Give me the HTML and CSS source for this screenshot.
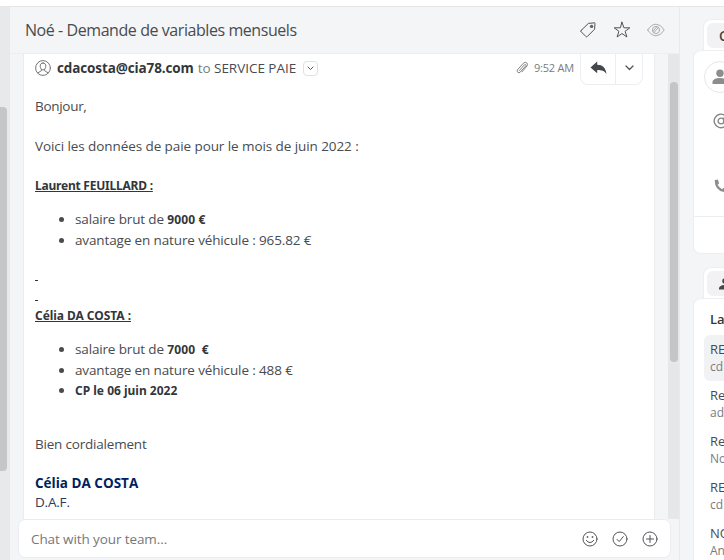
FILE: index.html
```html
<!DOCTYPE html>
<html lang="fr">
<head>
<meta charset="utf-8">
<title>Noé - Demande de variables mensuels</title>
<link rel="stylesheet" href="styles.css">
</head>
<body>
<div class="topbar"></div>
<div class="app">
  <aside class="rail"><div class="rail-thumb"></div></aside>
  <main class="main">
    <header class="head">
      <h1><span class="t-title">Noé - Demande de variables mensuels</span></h1>
      <svg class="ic" width="18" height="18" viewBox="0 0 18 18"><path d="M2 9.6 9.4 2.4 15.6 1.8 16 2.2 15.6 8.2 8.2 15.6Q7.6 16.2 7 15.6L2 10.6Q1.5 10.1 2 9.6Z"/><circle cx="12.6" cy="5.4" r="1.7" class="fill"/></svg>
      <svg class="ic" width="18" height="18" viewBox="0 0 18 18"><path d="M9 1.2 10.9 6.8H16.8L12.1 10.3 13.9 16 9 12.5 4.1 16 5.9 10.3 1.2 6.8H7.1Z"/></svg>
      <svg class="ic pale" width="18" height="18" viewBox="0 0 18 18"><path d="M.8 9Q4.2 3.2 9 3.2T17.2 9Q13.8 14.8 9 14.8T.8 9Z"/><circle cx="9" cy="9" r="3.6"/><path d="M6.9 11.6 11.3 6.6M6 10.2 9.8 5.8"/></svg>
    </header>
    <div class="thread">
      <article class="mail">
        <div class="from">
          <svg class="avatar" width="16" height="16" viewBox="0 0 16 16"><circle cx="8" cy="8" r="7.4"/><path d="M8 3C6.2 3 5.1 4.2 5.2 6.2 5.3 8.4 6.5 10 8 10S10.7 8.4 10.8 6.2C10.9 4.2 9.8 3 8 3ZM6.4 9.5V10.7L3 12.8M9.6 9.5V10.7L13 12.8"/></svg>
          <span class="t-sender">cdacosta@cia78.com</span>
          <span class="t-to"><i>to</i> SERVICE PAIE</span>
          <span class="more"><svg width="7" height="5" viewBox="0 0 7 5"><path d="M1 1 3.5 3.5 6 1"/></svg></span>
          <svg class="clip" width="12" height="14" viewBox="0 0 12 14"><path d="M3.4 9.5 8.5 3.7Q9.3 3.1 9.8 3.7T9.7 5L4.2 11.2Q3 12.3 1.8 11.3T1.5 8.7L7.6 2Q9.3.6 10.8 1.9T11 5L6 10.8"/></svg>
          <time>9:52 AM</time>
          <div class="reply">
            <span class="rb"><svg width="17" height="14" viewBox="0 0 17 14"><path class="solid" d="M.5 6.4 7.2.5V3.7C12.5 3.9 15.7 6.5 16.5 13 14.4 9.8 11.8 9 7.2 9V12.3Z"/></svg></span>
            <span class="rb drop"><svg width="9" height="6" viewBox="0 0 9 6"><path d="M1 1 4.5 4.5 8 1"/></svg></span>
          </div>
        </div>
        <div class="body">
          <p><span class="t-bonjour">Bonjour,</span></p>
          <p class="gap20"><span class="t-voici">Voici les données de paie pour le mois de juin 2022 :</span></p>
          <p class="gap20 name"><u class="t-laurent">Laurent FEUILLARD :</u></p>
          <ul>
            <li><span class="t-li">salaire brut de</span> <b class="t-9000">9000 €</b></li>
            <li><span class="t-av">avantage en nature véhicule : 965.82 €</span></li>
          </ul>
          <p class="name dash first"><u>&nbsp;</u></p>
          <p class="name dash"><u>&nbsp;</u></p>
          <p class="name"><u class="t-celia">Célia DA COSTA :</u></p>
          <ul>
            <li><span class="t-li">salaire brut de</span> <b class="t-9000">7000 &nbsp;€</b></li>
            <li><span class="t-av">avantage en nature véhicule : 488 €</span></li>
            <li class="last"><b>CP le 06 juin 2022</b></li>
          </ul>
          <p class="bye"><span class="t-bye">Bien cordialement</span></p>
          <p class="sign"><strong class="t-sign">Célia DA COSTA</strong></p>
          <p class="daf"><span class="t-daf">D.A.F.</span></p>
        </div>
      </article>
      <div class="track"><div class="thumb"></div></div>
    </div>
    <footer class="chat">
      <span class="t-chat">Chat with your team...</span>
      <svg class="ic" width="16" height="16" viewBox="0 0 16 16"><circle cx="8" cy="8" r="7"/><path d="M4.3 9.4Q8 14 11.7 9.4"/><circle class="fill" cx="5.5" cy="6" r=".9"/><circle class="fill" cx="10.5" cy="6" r=".9"/></svg>
      <svg class="ic" width="16" height="16" viewBox="0 0 16 16"><circle cx="8" cy="8" r="7"/><path d="M5 8.4 7.2 10.6 11.3 5.6"/></svg>
      <svg class="ic" width="16" height="16" viewBox="0 0 16 16"><circle cx="8" cy="8" r="7"/><path d="M8 4.5V11.5M4.5 8H11.5"/></svg>
    </footer>
  </main>
  <aside class="side">
    <div class="tab"><div class="pill"><b>C</b></div></div>
    <section class="card contact">
      <div class="round"><svg width="16" height="16" viewBox="0 0 16 16"><circle cx="8" cy="4.2" r="3.7"/><path d="M.5 15V13C.5 10.5 4 9 8 9S15.5 10.5 15.5 13V15Z"/></svg></div>
      <svg class="at" width="16" height="16" viewBox="0 0 16 16"><circle cx="8" cy="8" r="2.9"/><path d="M10.9 5V9.2Q11 10.8 12.6 10.8 14.8 10.5 14.8 8A6.8 6.8 0 1 0 11.5 13.8"/></svg>
      <svg class="phone" width="14" height="14" viewBox="0 0 14 14"><path d="M.6 1.2 3.8.6 5.1 4.2 3.6 5.7Q5 8.6 8.2 10.3L9.7 8.8 13.4 10 12.8 13.3Q1 13 .6 1.2Z"/></svg>
      <div class="rule"></div>
    </section>
    <div class="tab second"><div class="pill"><svg width="16" height="12" viewBox="0 0 16 12"><circle cx="6" cy="3" r="2.8"/><path d="M0 11.5V10Q1 7 6 7T12 10V11.5Z"/></svg></div></div>
    <section class="card list">
      <h2>La</h2>
      <div class="row on"><span>RE</span><small>cd</small></div>
      <div class="row"><span>Re</span><small>ad</small></div>
      <div class="row"><span>Re</span><small>No</small></div>
      <div class="row"><span>RE</span><small>cd</small></div>
      <div class="row"><span>NO</span><small>An</small></div>
    </section>
  </aside>
</div>
</body>
</html>
```
FILE: styles.css
```css
* { box-sizing: border-box; margin: 0; padding: 0; }
body { width: 724px; height: 560px; overflow: hidden; background: #f4f5f7; color: #484b50; font: 13.5px/20px "Open Sans", "Noto Sans", sans-serif; white-space: nowrap; }
svg { display: block; flex: none; fill: none; stroke: #505357; stroke-width: 1; stroke-linejoin: round; stroke-linecap: round; }
.topbar { height: 7px; background: #fff; border-bottom: 1px solid #e4e6e9; }
.app { display: grid; grid-template-columns: 10px 670px 44px; height: 553px; }
.rail { background: #e8e9eb; padding-top: 100px; }
.rail-thumb { width: 7px; height: 364px; background: #c5c6c8; border-radius: 0 4px 4px 0; }
.main { display: flex; flex-direction: column; min-width: 0; }
.head { height: 47px; flex: none; display: flex; align-items: center; padding: 0 15px; gap: 16px; border-bottom: 1px solid #eceef0; }
h1 { flex: 1; font-size: 16px; font-weight: 400; line-height: 22px; }
.pale { stroke: #a9adb1; }
.fill { fill: #606367; stroke: none; }
.thread { height: 465px; flex: none; display: flex; justify-content: space-between; padding-left: 13px; overflow: hidden; }
.mail { width: 632px; background: #fff; border: solid #eaecef; border-width: 0 1px; padding: 0 11px; }
.from { display: flex; height: 32px; align-items: center; padding-bottom: 4px; }
.avatar { margin-right: 6px; stroke: #777; }
.from .t-sender { font-weight: 700; color: #333639; margin-right: 4px; }
.t-to i { font-style: normal; color: #777c82; }
.more { width: 15px; height: 15px; margin-left: 7px; border: 1px solid #dfe1e4; border-radius: 4px; display: grid; place-items: center; }
.clip { margin-left: auto; stroke: #777; stroke-width: .9; }
time { margin: 0 6px 0 6px; font-size: 11px; color: #777c82; letter-spacing: -.2px; }
.reply { display: flex; width: 63px; height: 31px; margin-bottom: -3px; border: 1px solid #eceef0; border-top: 0; border-radius: 0 0 8px 8px; }
.rb { width: 34px; display: grid; place-items: center; padding-bottom: 3px; }
.drop { width: 27px; border-left: 1px solid #eceef0; }
.drop svg { stroke-width: 1.3; }
.solid { fill: #45484b; stroke: none; }
.body { padding-top: 10px; }
.body p { height: 20px; }
.body .gap20 { margin-top: 20px; }
.name { font: 700 12px/20px "Noto Sans", sans-serif; color: #33363a; }
.body ul { padding: 13px 0 13px 40px; list-style: disc; }
.body li { height: 21px; line-height: 20px; }
.body .last { line-height: 19px; }
.body li b { font-family: "Noto Sans", sans-serif; font-size: 12px; color: #33363a; }
.body .first { margin-top: 2px; }
.dash u { display: block; width: 3px; height: 15px; border-bottom: 1px solid #33363a; text-decoration: none; }
.body .bye { margin-top: 19px; }
.body .sign { margin-top: 19px; height: 19px; color: #001f5f; }
.daf { color: #2d3b5c; }
.track { width: 12px; background: #e6e7e9; padding: 28px 2px 0; }
.thumb { height: 280px; background: #c3c5c7; border-radius: 4px; }
.chat { margin-left: 8px; width: 653px; height: 39px; background: #fff; border: 1px solid #eaecef; border-radius: 7px; display: flex; align-items: center; padding: 0 12px; gap: 14px; color: #777; }
.chat span { flex: 1; }
.side { overflow: hidden; padding: 12px 0 0 13px; border-left: 1px solid #e9eaed; margin-left: -1px; }
.tab { margin-left: 10px; width: 60px; height: 31px; padding: 3px; background: #fff; border: 1px solid #eceef0; border-bottom: 0; border-radius: 8px 8px 0 0; }
.pill { height: 25px; border-radius: 6px; background: #f2f2f4; padding-left: 12px; display: flex; align-items: center; color: #444; }
.pill b { font-weight: 600; }
.card { width: 90px; background: #fff; border: 1px solid #eceef0; border-radius: 8px; }
.contact { height: 204px; }
.round { width: 32px; height: 32px; margin: 10px 0 0 10px; border: 1px solid #e6e7e9; border-radius: 50%; display: grid; place-items: center; }
.round svg, .phone { fill: #8b8d8f; stroke: none; }
.at { margin: 20px 0 0 19px; stroke: #85888b; stroke-width: 1.4; }
.phone { margin: 50px 0 0 20px; }
.rule { margin-top: 23px; height: 1px; background: #eceef0; }
.tab.second { margin-top: 13px; }
.second svg { fill: #45484b; stroke: none; }
.list { height: 300px; }
h2 { font-size: 13px; line-height: 20px; margin: 10px 0 6px 16px; color: #33363a; font-weight: 600; }
.row { height: 46px; margin-left: 10px; padding: 4px 0 0 6px; border-radius: 6px; display: flex; flex-direction: column; }
.on { background: #f1f2f4; }
.row span { font-size: 13px; line-height: 21px; height: 19px; }
.row small { font-size: 12px; line-height: 17px; color: #777c82; }
.t-title { letter-spacing: -.43px; }
.t-sender { letter-spacing: -.12px; }
.t-to { letter-spacing: -.03px; }
.t-bonjour { letter-spacing: -.3px; }
.t-voici { letter-spacing: -.08px; }
.t-li { letter-spacing: -.15px; }
.t-av { letter-spacing: -.13px; }
.t-9000 { letter-spacing: .1px; }
.t-laurent { letter-spacing: -.22px; }
.t-celia { letter-spacing: -.05px; }
.t-bye, .t-daf { letter-spacing: -.2px; }
.t-chat { letter-spacing: -.1px; }
```
